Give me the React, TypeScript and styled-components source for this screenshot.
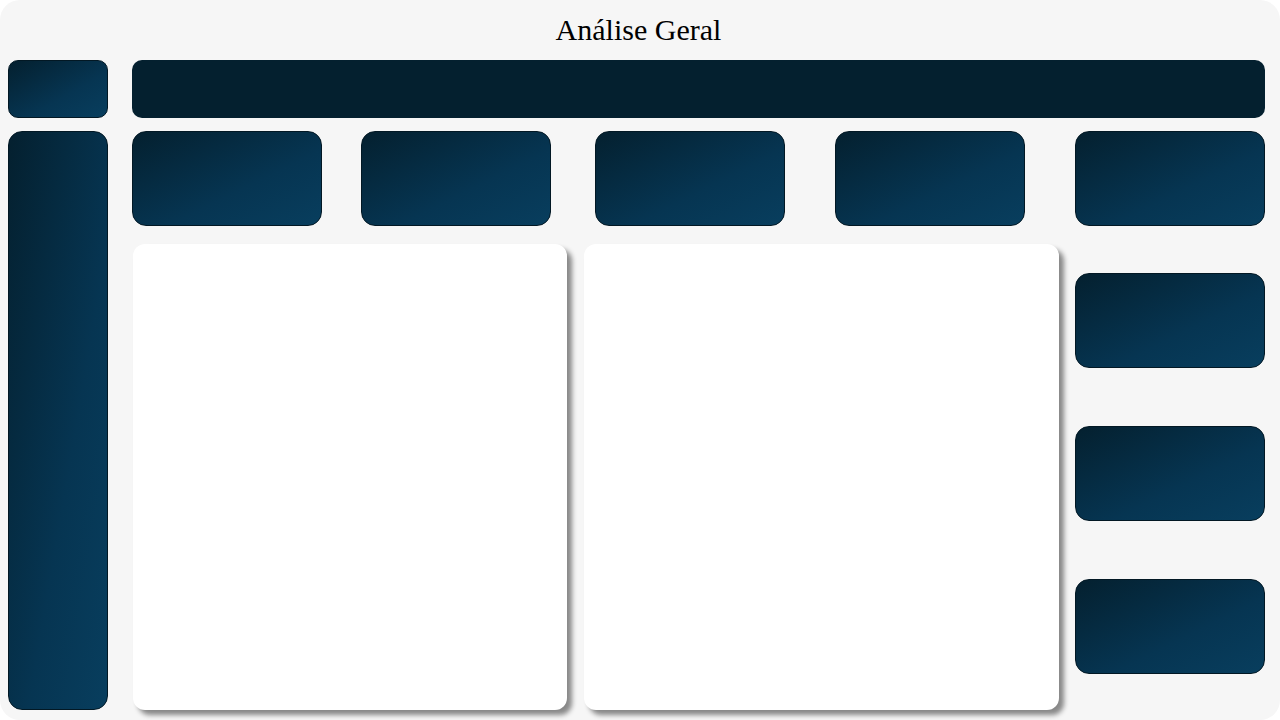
import React from "react";
import styled, { createGlobalStyle } from "styled-components";

const Global = createGlobalStyle`
  html, body { margin: 0; padding: 0; background: #ffffff; }
  #root { width: 1280px; height: 720px; }
`;

const Page = styled.div`
  box-sizing: border-box;
  width: 1280px;
  height: 720px;
  background: #f6f6f6;
  border-radius: 20px;
  padding: 0 16px 10px 8px;
  display: grid;
  grid-template-columns: 100px 1fr;
  grid-template-rows: 60px 1fr;
  column-gap: 24px;
  overflow: hidden;
`;

const Title = styled.h1`
  grid-column: 1 / -1;
  margin: 0;
  display: flex;
  align-items: center;
  justify-content: center;
  font-family: "Liberation Serif", "Times New Roman", serif;
  font-weight: 400;
  font-size: 30px;
  color: #000;
  padding-left: 4px;
`;

const Side = styled.div`
  display: flex;
  flex-direction: column;
  gap: 13px;
`;

const Tile = styled.div<{ $h?: number; $w?: number; $r?: number }>`
  box-sizing: border-box;
  width: ${(p) => (p.$w ? `${p.$w}px` : "100%")};
  height: ${(p) => (p.$h ? `${p.$h}px` : "100%")};
  border-radius: ${(p) => p.$r ?? 14}px;
  background: linear-gradient(to bottom right, #04202f 0%, #063552 60%, #083e5e 100%);
  border: 1px solid #021824;
`;

const SideTall = styled(Tile)`
  flex: 1;
`;

const Main = styled.div`
  display: flex;
  flex-direction: column;
`;

const TopBar = styled.div`
  height: 58px;
  border-radius: 10px;
  background: #04202f;
`;

const KpiRow = styled.div`
  margin-top: 13px;
  display: grid;
  grid-template-columns: 229px 234px 240px 240px 190px;
  height: 95px;
`;

const Lower = styled.div`
  margin-top: 18px;
  flex: 1;
  display: grid;
  grid-template-columns: 435px 476px 1fr;
  column-gap: 16px;
`;

const Panel = styled.div<{ $ml?: number }>`
  background: #ffffff;
  border-radius: 12px;
  box-shadow: 5px 5px 5px rgba(0, 0, 0, 0.45);
  margin-left: ${(p) => p.$ml ?? 0}px;
`;

const RightCol = styled.div`
  display: flex;
  flex-direction: column;
  gap: 58px;
  padding-top: 29px;
`;

export default function App() {
  return (
    <>
      <Global />
      <Page>
        <Title>Análise Geral</Title>
        <Side>
          <Tile $h={58} $r={10} />
          <SideTall $r={14} />
        </Side>
        <Main>
          <TopBar />
          <KpiRow>
            {[0, 1, 2, 3, 4].map((i) => (
              <Tile key={i} $w={190} $h={95} />
            ))}
          </KpiRow>
          <Lower>
            <Panel $ml={1} />
            <Panel $ml={1} />
            <RightCol>
              {[0, 1, 2].map((i) => (
                <Tile key={i} $w={190} $h={95} />
              ))}
            </RightCol>
          </Lower>
        </Main>
      </Page>
    </>
  );
}
